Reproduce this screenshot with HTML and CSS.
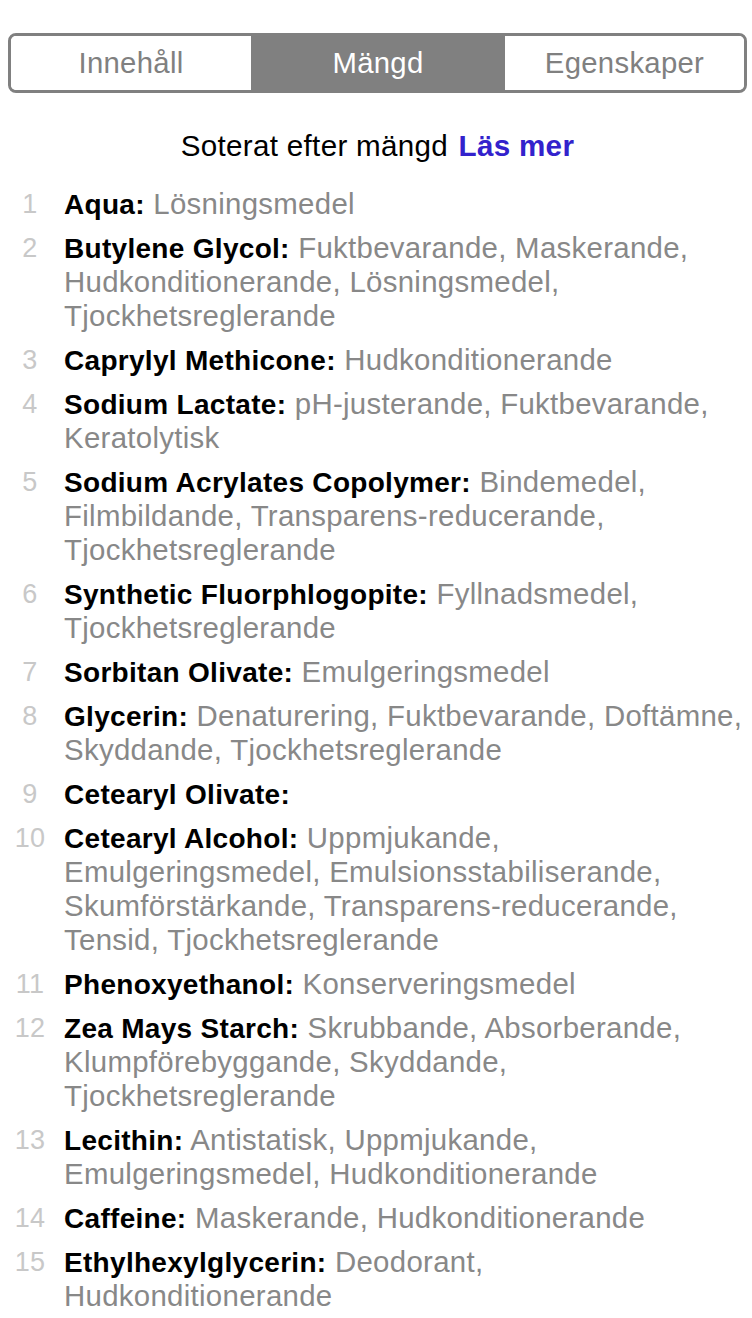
FILE: index.html
```html
<!DOCTYPE html>
<html lang="sv">
<head>
<meta charset="utf-8">
<link rel="stylesheet" href="styles.css">
</head>
<body>
<div class="page">
  <div class="segmented">
    <div class="seg">Innehåll</div>
    <div class="seg active">Mängd</div>
    <div class="seg">Egenskaper</div>
  </div>
  <p class="sorted">Soterat efter mängd <a class="more">Läs mer</a></p>
  <ol class="list">
    <li><span class="num">1</span><span class="text"><b>Aqua:</b> Lösningsmedel</span></li>
    <li><span class="num">2</span><span class="text"><b>Butylene Glycol:</b> Fuktbevarande, Maskerande, Hudkonditionerande, Lösningsmedel, Tjockhetsreglerande</span></li>
    <li><span class="num">3</span><span class="text"><b>Caprylyl Methicone:</b> Hudkonditionerande</span></li>
    <li><span class="num">4</span><span class="text"><b>Sodium Lactate:</b> pH-justerande, Fuktbevarande, Keratolytisk</span></li>
    <li><span class="num">5</span><span class="text"><b>Sodium Acrylates Copolymer:</b> Bindemedel, Filmbildande, Transparens-reducerande, Tjockhetsreglerande</span></li>
    <li><span class="num">6</span><span class="text"><b>Synthetic Fluorphlogopite:</b> Fyllnadsmedel, Tjockhetsreglerande</span></li>
    <li><span class="num">7</span><span class="text"><b>Sorbitan Olivate:</b> Emulgeringsmedel</span></li>
    <li><span class="num">8</span><span class="text"><b>Glycerin:</b> Denaturering, Fuktbevarande, Doftämne, Skyddande, Tjockhetsreglerande</span></li>
    <li><span class="num">9</span><span class="text"><b>Cetearyl Olivate:</b></span></li>
    <li><span class="num">10</span><span class="text"><b>Cetearyl Alcohol:</b> Uppmjukande, Emulgeringsmedel, Emulsionsstabiliserande, Skumförstärkande, Transparens-reducerande, Tensid, Tjockhetsreglerande</span></li>
    <li><span class="num">11</span><span class="text"><b>Phenoxyethanol:</b> Konserveringsmedel</span></li>
    <li><span class="num">12</span><span class="text"><b>Zea Mays Starch:</b> Skrubbande, Absorberande, Klumpförebyggande, Skyddande, Tjockhetsreglerande</span></li>
    <li><span class="num">13</span><span class="text"><b>Lecithin:</b> Antistatisk, Uppmjukande, Emulgeringsmedel, Hudkonditionerande</span></li>
    <li><span class="num">14</span><span class="text"><b>Caffeine:</b> Maskerande, Hudkonditionerande</span></li>
    <li><span class="num">15</span><span class="text"><b>Ethylhexylglycerin:</b> Deodorant, Hudkonditionerande</span></li>
  </ol>
</div>
</body>
</html>
```

FILE: styles.css
```css
* { box-sizing: border-box; }
html, body { margin: 0; padding: 0; background: #fff; }
body {
  font-family: "Liberation Sans", Arial, Helvetica, sans-serif;
  color: #000;
}
.page {
  padding: 33px 5px 0 8px;
}
.segmented {
  display: grid;
  grid-template-columns: 240px 254px 1fr;
  height: 60px;
  border: 3px solid #808080;
  border-radius: 8px;
  overflow: hidden;
}
.seg {
  display: flex;
  align-items: center;
  justify-content: center;
  font-size: 29.3px;
  letter-spacing: 0.3px;
  color: #808080;
  background: #fff;
}
.seg.active {
  background: #808080;
  color: #fff;
}
.sorted {
  margin: 36px 0 0;
  text-align: center;
  font-size: 29.6px;
  line-height: 34px;
  letter-spacing: 0.3px;
}
.more {
  font-weight: bold;
  color: #3322cc;
  margin-left: 2px;
}
.list {
  list-style: none;
  margin: 24px 0 0;
  padding: 0;
  display: flex;
  flex-direction: column;
  gap: 10px;
}
.list li {
  display: grid;
  grid-template-columns: 44px 1fr;
  column-gap: 12px;
  font-size: 29.4px;
  line-height: 34px;
  letter-spacing: 0.3px;
}
.num {
  text-align: center;
  color: #c8c8c8;
  font-size: 27px;
}
.text {
  color: #888888;
}
.text b {
  color: #000;
  font-weight: bold;
  font-size: 28px;
  line-height: 1;
}
```
